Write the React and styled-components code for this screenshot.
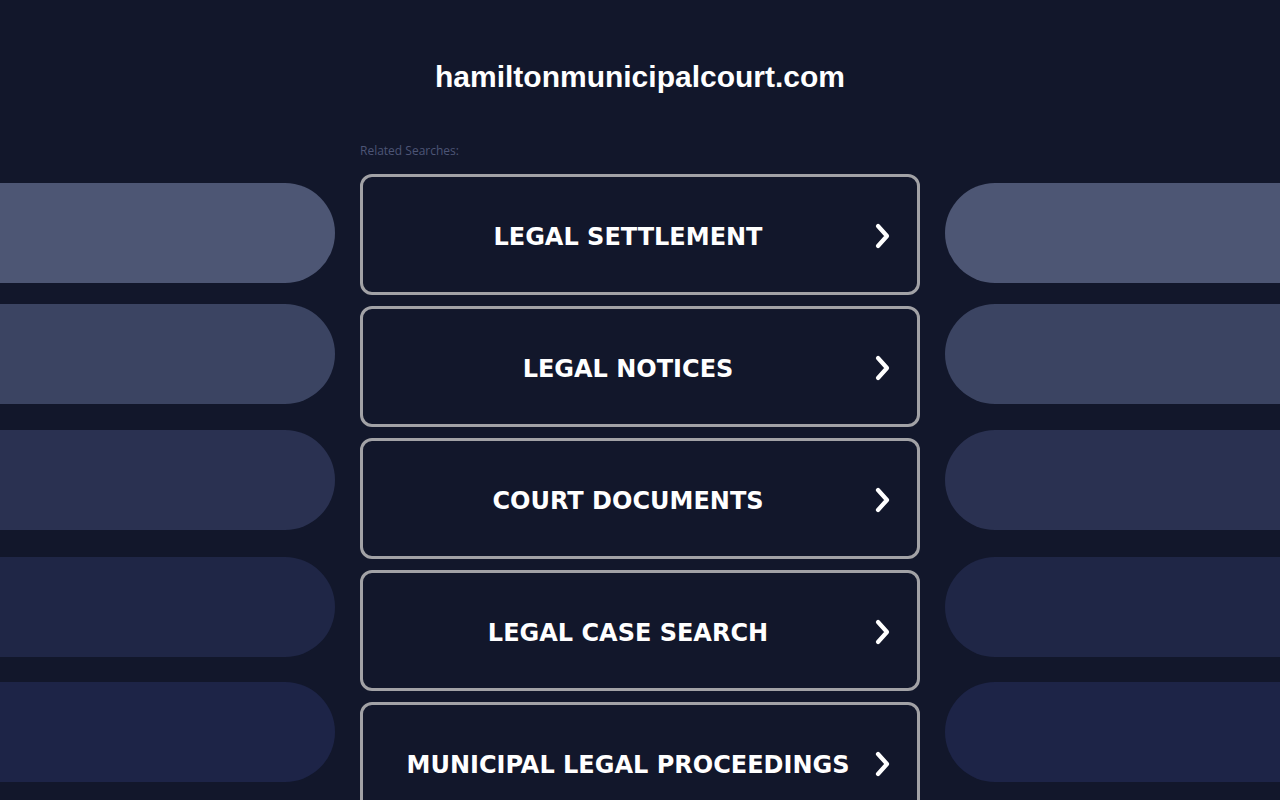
import styled, { createGlobalStyle } from "styled-components";

const Global = createGlobalStyle`
  html, body {
    margin: 0;
    padding: 0;
    background: #12172b;
  }
  body {
    font-family: "Liberation Sans", Arial, sans-serif;
    overflow: hidden;
  }
`;

const Page = styled.div`
  width: 1280px;
  height: 800px;
  overflow: hidden;
  background: #12172b;
`;

const Title = styled.h1`
  margin: 0;
  padding-top: 59px;
  height: 36px;
  line-height: 36px;
  text-align: center;
  color: #ffffff;
  font-size: 30px;
  font-weight: bold;
`;

const Layout = styled.div`
  display: grid;
  grid-template-columns: 335px 560px 335px;
  column-gap: 25px;
  margin-top: 48px;
`;

const Side = styled.div`
  display: flex;
  flex-direction: column;
  padding-top: 40px;
`;

const Pill = styled.div`
  height: 100px;
  margin-top: ${(p) => p.$offset}px;
  background: ${(p) => p.$color};
  border-radius: ${(p) => (p.$left ? "0 50px 50px 0" : "50px 0 0 50px")};
`;

const Center = styled.div`
  display: flex;
  flex-direction: column;
`;

const Label = styled.div`
  font-family: "Open Sans", "Noto Sans", sans-serif;
  font-size: 12px;
  color: #4d5576;
  height: 16px;
  line-height: 16px;
  margin-bottom: 15px;
`;

const List = styled.div`
  display: flex;
  flex-direction: column;
  gap: 11px;
`;

const Card = styled.a`
  box-sizing: border-box;
  height: 121px;
  border: 3px solid #a2a2a6;
  border-radius: 12px;
  display: grid;
  grid-template-areas: "cell";
  align-items: center;
  text-decoration: none;
  color: #ffffff;
  cursor: pointer;
`;

const CardText = styled.span`
  grid-area: cell;
  justify-self: center;
  padding: 5px 24px 0 0;
  font-family: "DejaVu Sans", Verdana, sans-serif;
  font-weight: bold;
  font-size: 24px;
  text-transform: uppercase;
  white-space: nowrap;
`;

const Chevron = styled.svg`
  grid-area: cell;
  justify-self: end;
  margin: 3px 24px 0 0;
  width: 20px;
  height: 28px;
`;

const Arrow = () => (
  <Chevron viewBox="0 0 20 28">
    <path
      d="M5 4 L14 14 L5 24"
      fill="none"
      stroke="#ffffff"
      strokeWidth="4.2"
      strokeLinecap="round"
      strokeLinejoin="round"
    />
  </Chevron>
);

const pills = [
  { color: "#4d5674", offset: 0 },
  { color: "#3b4462", offset: 21 },
  { color: "#2a3151", offset: 26 },
  { color: "#1f2646", offset: 27 },
  { color: "#1d2447", offset: 25 },
];

const searches = [
  "Legal Settlement",
  "Legal Notices",
  "Court Documents",
  "Legal Case Search",
  "Municipal Legal Proceedings",
];

export default function App() {
  return (
    <Page>
      <Global />
      <Title>hamiltonmunicipalcourt.com</Title>
      <Layout>
        <Side>
          {pills.map((p, i) => (
            <Pill key={i} $left $color={p.color} $offset={p.offset} />
          ))}
        </Side>
        <Center>
          <Label>Related Searches:</Label>
          <List>
            {searches.map((s) => (
              <Card key={s}>
                <CardText>{s}</CardText>
                <Arrow />
              </Card>
            ))}
          </List>
        </Center>
        <Side>
          {pills.map((p, i) => (
            <Pill key={i} $color={p.color} $offset={p.offset} />
          ))}
        </Side>
      </Layout>
    </Page>
  );
}
